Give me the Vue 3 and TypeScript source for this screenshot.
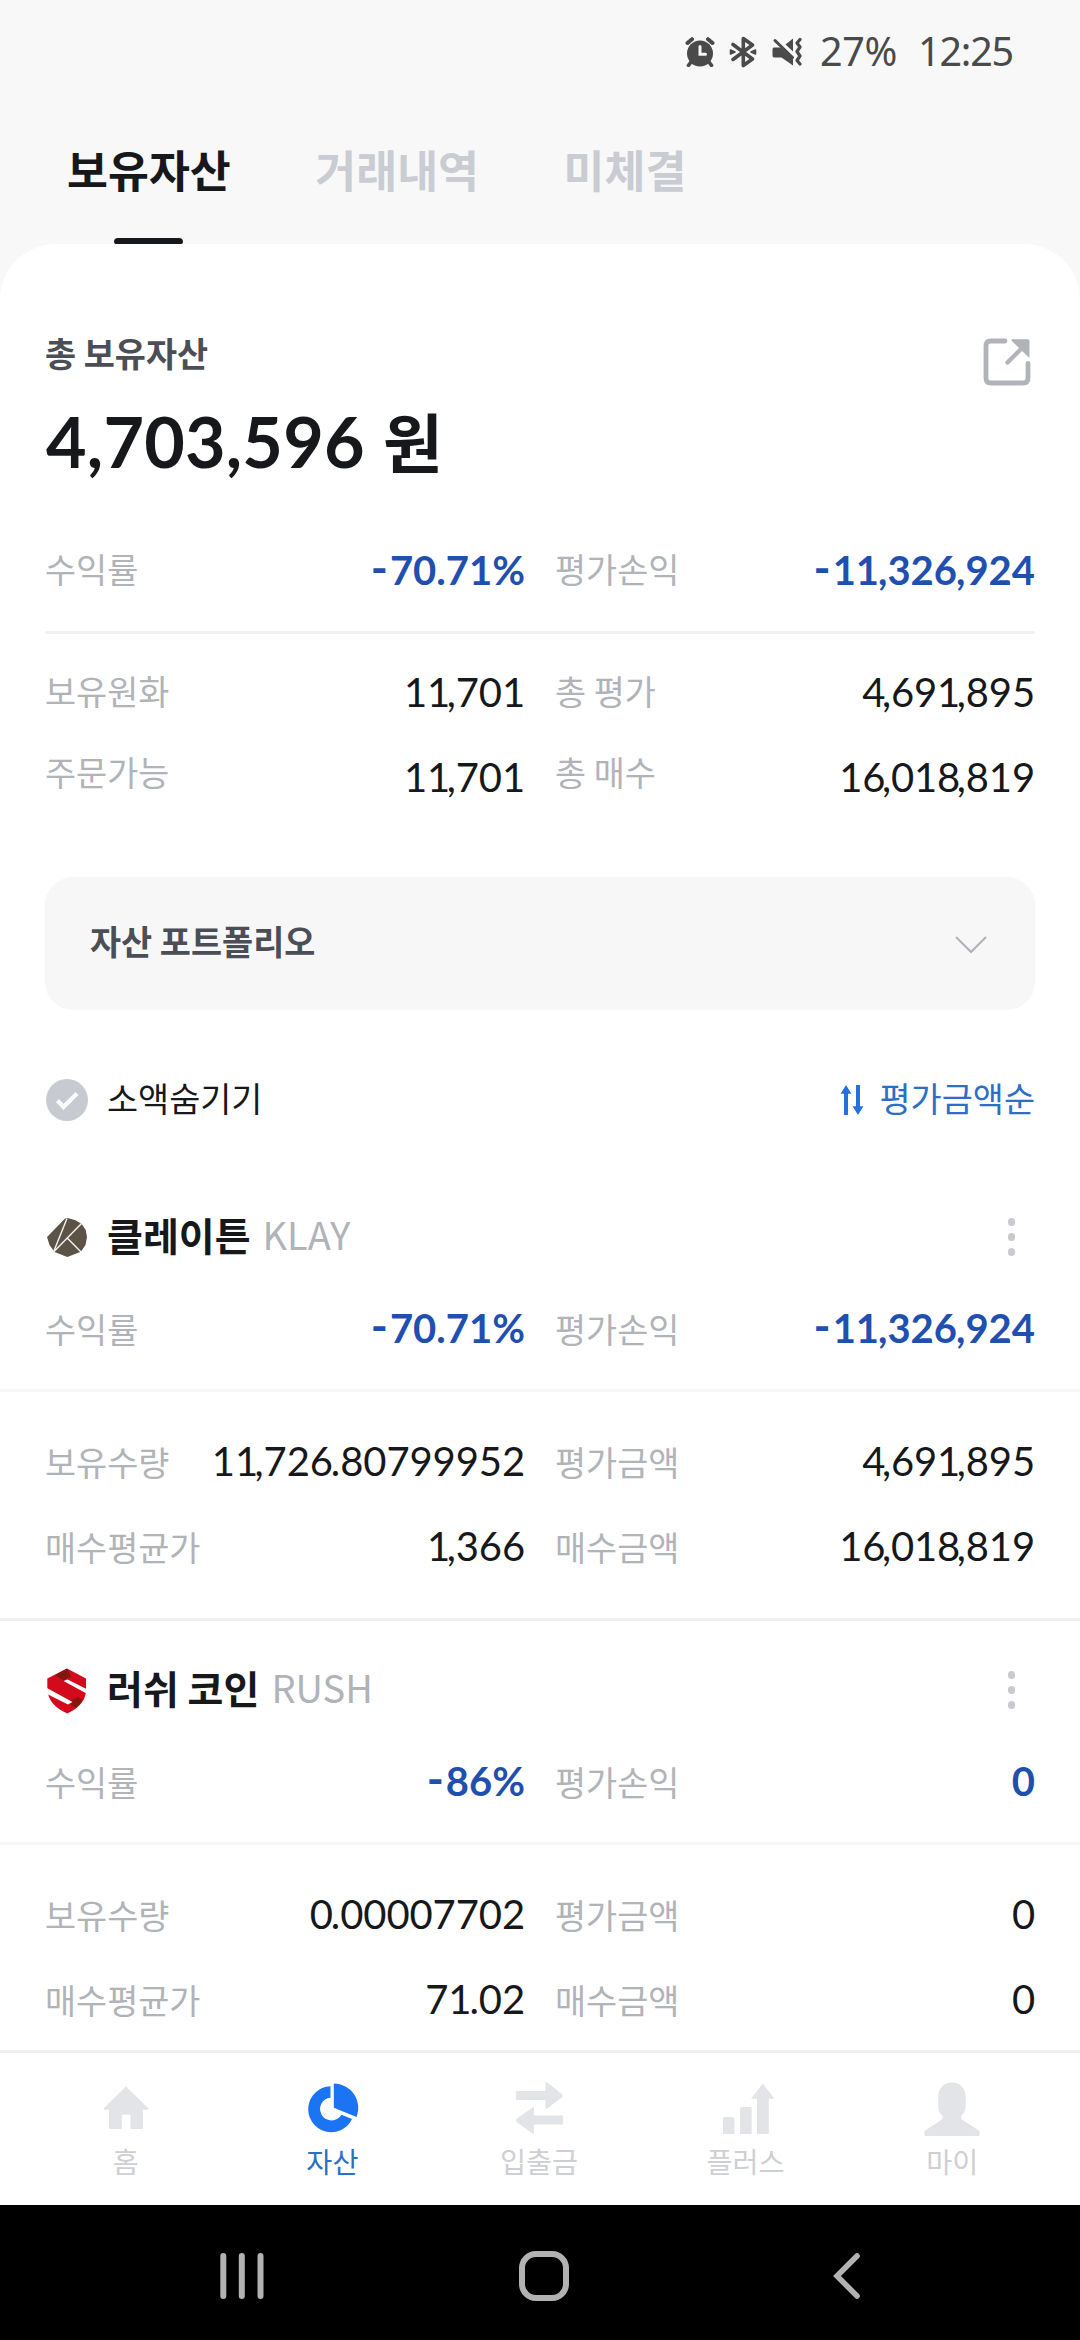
<script setup lang="ts">
interface Stat {
  label: string
  value: string
}

interface Coin {
  id: string
  name: string
  symbol: string
  profit: Stat[]
  details: Stat[][]
}

interface NavItem {
  id: string
  label: string
  active?: boolean
}

const tabs: string[] = ['보유자산', '거래내역', '미체결']

const summaryProfit: Stat[] = [
  { label: '수익률', value: '-70.71%' },
  { label: '평가손익', value: '-11,326,924' },
]

const summaryCash: Stat[] = [
  { label: '보유원화', value: '11,701' },
  { label: '총 평가', value: '4,691,895' },
]

const summaryOrder: Stat[] = [
  { label: '주문가능', value: '11,701' },
  { label: '총 매수', value: '16,018,819' },
]

const coins: Coin[] = [
  {
    id: 'klay',
    name: '클레이튼',
    symbol: 'KLAY',
    profit: [
      { label: '수익률', value: '-70.71%' },
      { label: '평가손익', value: '-11,326,924' },
    ],
    details: [
      [
        { label: '보유수량', value: '11,726.80799952' },
        { label: '평가금액', value: '4,691,895' },
      ],
      [
        { label: '매수평균가', value: '1,366' },
        { label: '매수금액', value: '16,018,819' },
      ],
    ],
  },
  {
    id: 'rush',
    name: '러쉬 코인',
    symbol: 'RUSH',
    profit: [
      { label: '수익률', value: '-86%' },
      { label: '평가손익', value: '0' },
    ],
    details: [
      [
        { label: '보유수량', value: '0.00007702' },
        { label: '평가금액', value: '0' },
      ],
      [
        { label: '매수평균가', value: '71.02' },
        { label: '매수금액', value: '0' },
      ],
    ],
  },
]

const navItems: NavItem[] = [
  { id: 'home', label: '홈' },
  { id: 'asset', label: '자산', active: true },
  { id: 'transfer', label: '입출금' },
  { id: 'plus', label: '플러스' },
  { id: 'my', label: '마이' },
]

// Splits an amount into digit runs and punctuation, so punctuation can be kerned on its own.
function parts(value: string): string[] {
  return value.split(/([,.-])/).filter((p) => p !== '')
}

function partClass(part: string): string {
  if (part === ',') return 'comma'
  if (part === '.') return 'point'
  if (part === '-') return 'minus'
  return 'digits'
}
</script>

<template>
  <div class="screen">
    <header class="status">
      <svg class="status-icon alarm" viewBox="0 0 30 30">
        <circle cx="15" cy="16.5" r="13" fill="#4a4a4a" />
        <path d="M2.5 6 L7 2.2 M27.5 6 L23 2.2" stroke="#4a4a4a" stroke-width="4" stroke-linecap="round" />
        <path d="M6 25 L3.5 28.3 M24 25 L26.5 28.3" stroke="#4a4a4a" stroke-width="3.6" stroke-linecap="round" />
        <path d="M15 9.5 V17.3 H20.5" fill="none" stroke="#f8f8f8" stroke-width="3" stroke-linecap="round" />
      </svg>
      <svg class="status-icon bluetooth" viewBox="0 0 28 32">
        <path d="M4 8.5 L23.5 23 L14.3 29.5 V2.5 L23.5 9 L4 23.5" fill="none" stroke="#4a4a4a" stroke-width="3.6" stroke-linecap="round" stroke-linejoin="round" />
        <path d="M1.5 14 L6 16 L1.5 18 Z M26.5 14 L22 16 L26.5 18 Z" fill="#4a4a4a" stroke="#4a4a4a" stroke-width="1.6" stroke-linejoin="round" />
      </svg>
      <svg class="status-icon mute" viewBox="0 0 30 30">
        <path d="M2 10.5 H8.5 L21 22 V28.5 L9.5 20.5 H2 Q.5 20.5 .5 18.5 V12.5 Q.5 10.5 2 10.5 Z" fill="#4a4a4a" />
        <path d="M21 1.5 V14.5 L13.5 7.5 Z" fill="#4a4a4a" />
        <path d="M3 3.5 L20.5 20.5" stroke="#4a4a4a" stroke-width="3" stroke-linecap="round" />
        <path d="M28 2.500 L25 6 L28 10 L25 14.500 L28 19 L25 23.500 L28 27" fill="none" stroke="#4a4a4a" stroke-width="3.2" stroke-linecap="round" stroke-linejoin="round" />
      </svg>
      <span class="battery">27%</span>
      <span class="clock">12:25</span>
    </header>

    <nav class="tabs">
      <div v-for="(tab, i) in tabs" :key="tab" class="tab" :class="{ on: i === 0 }">
        <span class="tab-text">{{ tab }}</span>
        <span v-if="i === 0" class="tab-line"></span>
      </div>
    </nav>

    <main class="card">
      <section class="summary">
        <div class="summary-head">
          <h1 class="title">총 보유자산</h1>
          <svg class="share" viewBox="0 0 48 48">
            <path d="M22 3 H8 Q3 3 3 8 V40 Q3 45 8 45 H40 Q45 45 45 40 V25.5" fill="none" stroke="#b0b3ba" stroke-width="4.8" stroke-linecap="round" />
            <path d="M24.5 24.5 L38 11" stroke="#b0b3ba" stroke-width="4.4" stroke-linecap="round" />
            <path d="M29.5 1.2 H44.8 Q46.5 1.2 46.5 3 V18.3 Q46.5 20 45 18.7 L28.8 3 Q27.5 1.2 29.5 1.2 Z" fill="#b0b3ba" />
          </svg>
        </div>
        <p class="total">4,703,596 <span class="won">원</span></p>

        <div class="row row-profit">
          <div v-for="s in summaryProfit" :key="s.label" class="cell">
            <span class="label">{{ s.label }}</span>
            <span class="value blue"><span v-for="(p, k) in parts(s.value)" :key="k" :class="partClass(p)">{{ p }}</span></span>
          </div>
        </div>
        <hr class="rule" />
        <div class="row row-cash">
          <div v-for="s in summaryCash" :key="s.label" class="cell">
            <span class="label">{{ s.label }}</span>
            <span class="value"><span v-for="(p, k) in parts(s.value)" :key="k" :class="partClass(p)">{{ p }}</span></span>
          </div>
        </div>
        <div class="row row-order">
          <div v-for="s in summaryOrder" :key="s.label" class="cell">
            <span class="label">{{ s.label }}</span>
            <span class="value"><span v-for="(p, k) in parts(s.value)" :key="k" :class="partClass(p)">{{ p }}</span></span>
          </div>
        </div>

        <div class="portfolio">
          <span class="portfolio-text">자산 포트폴리오</span>
          <svg class="chevron" viewBox="0 0 32 18">
            <path d="M1 1 L16 16 L31 1" fill="none" stroke="#b0b3b9" stroke-width="2" />
          </svg>
        </div>

        <div class="filter">
          <svg class="check" viewBox="0 0 42 42">
            <circle cx="21" cy="21" r="21" fill="#c8cad1" />
            <path d="M11.5 21.5 L17.5 28 L31 14.5" fill="none" stroke="#fff" stroke-width="4.2" />
          </svg>
          <span class="filter-text">소액숨기기</span>
          <svg class="sort-icon" viewBox="0 0 22 30">
            <path d="M5 0 L10.4 8.7 H7 V30 H3 V8.7 H-.4 Z M17 30 L11.6 21.3 H15 V0 H19 V21.3 H22.4 Z" fill="#2570dc" />
          </svg>
          <span class="sort-text">평가금액순</span>
        </div>
      </section>

      <section v-for="coin in coins" :key="coin.id" class="coin">
        <div class="coin-head">
          <svg v-if="coin.id === 'klay'" class="coin-icon" viewBox="0 0 42 46">
            <path d="M19 3.5 L21.5 3 L29 5 L35.5 8.7 L39.7 15 L41 22.3 L39.5 30 L34.8 36.7 L21.3 42 L8.5 37 L3.5 30 L1 22 L4 19 Z" fill="#5c5346" />
            <path d="M21 3.5 L7.5 37 M35.5 8.5 L7.5 37 M21 22.8 L35 37" fill="none" stroke="#f5f3ef" stroke-width="1.4" />
          </svg>
          <svg v-else class="coin-icon" viewBox="0 0 42 46">
            <path d="M21 .5 L40 10.5 V21 Q40.500 36.500 21.300 45.500 Q2 37 1.300 21 V10.500 Z" fill="#d20a1c" />
            <path d="M21 .5 L9 7 Q14 10.500 18 13 Q20 9.500 25 9 Z" fill="#83170f" />
            <path d="M32 29 L21.500 34.500 L30 40 Q34.500 36.500 36 32 Z" fill="#83170f" />
            <path d="M17.500 13 L21.500 11.500 L40.500 21 V25.500 Z M0 19.500 L26.500 34 L22 36.500 L1 26 Z" fill="#fff" />
          </svg>
          <span class="coin-name">{{ coin.name }}</span>
          <span class="coin-symbol">{{ coin.symbol }}</span>
          <span class="more"><i></i><i></i><i></i></span>
        </div>
        <div class="row coin-profit">
          <div v-for="s in coin.profit" :key="s.label" class="cell">
            <span class="label">{{ s.label }}</span>
            <span class="value blue"><span v-for="(p, k) in parts(s.value)" :key="k" :class="partClass(p)">{{ p }}</span></span>
          </div>
        </div>
        <hr class="coin-rule" />
        <div v-for="(line, i) in coin.details" :key="i" class="row coin-detail">
          <div v-for="s in line" :key="s.label" class="cell">
            <span class="label">{{ s.label }}</span>
            <span class="value"><span v-for="(p, k) in parts(s.value)" :key="k" :class="partClass(p)">{{ p }}</span></span>
          </div>
        </div>
      </section>
    </main>

    <nav class="bottom">
      <div v-for="item in navItems" :key="item.id" class="nav-item" :class="{ active: item.active }">
        <svg class="nav-icon" viewBox="0 0 60 60">
          <path v-if="item.id === 'home'" d="M30 9.5 L52 31 Q53 32.7 51 32.7 H47 V50.5 Q47 52 45.5 52 H34.5 V38.7 Q34.5 37.5 33.3 37.5 H27 Q25.8 37.5 25.8 38.7 V52 H14.5 Q13 52 13 50.5 V32.7 H9 Q7 32.7 8 31 Z" />
          <template v-else-if="item.id === 'asset'">
            <path d="M28.5 9.2 A23 23 0 1 0 50 42 L39.5 37.7 A11.5 11.5 0 1 1 28.5 20.5 Z" />
            <path d="M31.8 6.5 A24.5 24.5 0 0 1 54.5 40 L31.8 30.8 Z" />
          </template>
          <path v-else-if="item.id === 'transfer'" d="M8 14 Q7 14 7 15 V22 Q7 23 8 23 H36.5 V30.5 Q36.5 32.5 38.5 31.2 L53 20.3 Q54 18.6 53 17.3 L38.5 5.5 Q36.5 4.2 36.5 6 V14 Z M53 38.5 Q54 38.5 54 39.5 V46.5 Q54 47.5 53 47.5 H25 V55.5 Q25 57.5 23 56.2 L7.5 45 Q6.5 43.3 7.5 42 L23 30.8 Q25 29.5 25 31.5 V38.5 Z" />
          <path v-else-if="item.id === 'plus'" d="M7 41.5 Q7 40 8.5 40 H17 Q18.5 40 18.5 41.5 V57 H7 Z M24 31.5 Q24 30 25.5 30 H34.2 Q35.7 30 35.7 31.5 V57 H24 Z M41 57 V21.7 H35 L46.7 6.5 L58.5 21.7 H52.8 V57 Z" />
          <path v-else d="M30 5.5 C38 5.5 43.7 11.5 43.7 19 V29 C43.7 34 41 37 39.3 38.5 V42 L57.5 54 V59 H2.5 V54 L20.5 42 V38.5 C18 36.5 16.3 34 16.3 29 V19 C16.3 11.5 22 5.5 30 5.5 Z" />
        </svg>
        <span class="nav-label">{{ item.label }}</span>
      </div>
    </nav>

    <footer class="system">
      <svg class="sys recents" viewBox="0 0 46 50">
        <path d="M4.3 5 V45 M22.8 5 V45 M41.5 5 V45" stroke="#b2b2b2" stroke-width="6" stroke-linecap="round" />
      </svg>
      <svg class="sys home" viewBox="0 0 50 50">
        <rect x="3" y="3" width="44" height="44" rx="14" fill="none" stroke="#b2b2b2" stroke-width="6" />
      </svg>
      <svg class="sys back" viewBox="0 0 30 50">
        <path d="M26 5 L6 25 L26 45" fill="none" stroke="#b2b2b2" stroke-width="5.6" stroke-linecap="round" />
      </svg>
    </footer>
  </div>
</template>

<style>
body {
  margin: 0;
  background: #f8f8f8;
}
</style>

<style scoped>
.screen {
  display: flex;
  flex-direction: column;
  width: 1080px;
  height: 2340px;
  overflow: hidden;
  background: #f8f8f8;
  color: #17181b;
  font-family: 'Noto Sans CJK KR', sans-serif;
}

.status {
  display: flex;
  flex: none;
  align-items: center;
  box-sizing: border-box;
  height: 100px;
  padding: 4px 67px 0 685px;
  color: #4a4a4a;
  font-family: 'Noto Sans', sans-serif;
  font-size: 39.5px;
  line-height: 60px;
  white-space: nowrap;
}

.status-icon {
  flex: none;
}

.alarm {
  width: 30px;
  height: 30px;
}

.bluetooth {
  width: 28px;
  height: 32px;
  margin-left: 14px;
}

.mute {
  width: 30px;
  height: 30px;
  margin-left: 15px;
}

.battery {
  margin-left: 18px;
  padding-bottom: 3px;
  letter-spacing: -0.4px;
}

.clock {
  margin-left: auto;
  padding-bottom: 3px;
  letter-spacing: -1.2px;
}

.tabs {
  display: flex;
  flex: none;
  gap: 84.5px;
  height: 144px;
  padding-left: 67px;
}

.tab {
  display: flex;
  flex-direction: column;
  align-items: center;
  justify-content: space-between;
  color: #c9ccd3;
  font-size: 44.5px;
  font-weight: 700;
}

.tab-text {
  margin-top: 39px;
  line-height: 60px;
  white-space: nowrap;
}

.tab.on {
  color: #17181b;
}

.tab-line {
  width: 69px;
  height: 6px;
  border-radius: 4px 4px 2px 2px;
  background: #17181b;
}

.card {
  flex: none;
  height: 1806px;
  overflow: hidden;
  border-radius: 56px 56px 0 0;
  background: #fff;
}

.summary {
  padding: 79px 45px 0;
}

.summary-head {
  display: flex;
  align-items: flex-start;
  justify-content: space-between;
  height: 60px;
}

.title {
  margin: 0;
  color: #4b4e56;
  font-size: 33.8px;
  font-weight: 700;
  line-height: 60px;
}

.share {
  width: 48px;
  height: 48px;
  margin: 15px 4px 0 0;
}

.total {
  height: 80px;
  margin: 18px 0 0 1px;
  font-family: Lato, 'Noto Sans CJK KR', sans-serif;
  font-size: 70px;
  font-weight: 700;
  letter-spacing: 0.2px;
  line-height: 80px;
  white-space: nowrap;
}

.won {
  margin-left: 1px;
  font-size: 65px;
}

.row {
  display: grid;
  grid-template-columns: 480px 480px;
  gap: 30px;
  height: 60px;
}

.cell {
  display: flex;
  align-items: flex-start;
  justify-content: space-between;
  white-space: nowrap;
}

.label {
  color: #b0b3b8;
  font-size: 33.8px;
  line-height: 60px;
}

.value {
  font-family: Lato, 'Noto Sans CJK KR', sans-serif;
  font-size: 40px;
  letter-spacing: -0.1px;
  line-height: 60px;
}

.comma {
  margin-left: -3.5px;
}

.point {
  margin-left: -2px;
}

.blue {
  color: #1f50b0;
  font-weight: 700;
  letter-spacing: 0;
}

.blue .comma {
  margin-left: -1px;
}

.blue .point {
  margin-left: 0;
}

.blue .minus {
  margin-right: 2px;
  font-size: 46px;
  line-height: 0;
}

.row-profit {
  margin-top: 58px;
}

.row-profit .value {
  padding-top: 1px;
}

.rule {
  height: 3px;
  margin: 32px 0 0;
  border: 0;
  background: #f0f1f2;
}

.row-cash {
  margin-top: 27px;
}

.row-cash .value {
  padding-top: 1px;
}

.row-order {
  height: 63px;
  margin-top: 21px;
}

.row-order .value {
  padding-top: 5px;
}

.portfolio {
  display: flex;
  align-items: center;
  justify-content: space-between;
  box-sizing: border-box;
  height: 133px;
  margin-top: 72px;
  padding: 0 48px 0 45px;
  border-radius: 28px;
  background: #f7f7f8;
}

.portfolio-text {
  padding-bottom: 5px;
  color: #4b4e56;
  font-size: 33.8px;
  font-weight: 700;
  line-height: 60px;
}

.chevron {
  width: 32px;
  height: 18px;
  margin-top: 2px;
}

.filter {
  display: flex;
  align-items: center;
  height: 60px;
  margin-top: 60px;
  font-size: 33.8px;
  line-height: 60px;
}

.check {
  width: 42px;
  height: 42px;
  margin-left: 1px;
}

.filter-text {
  margin-left: 19px;
  padding-bottom: 4px;
}

.sort-icon {
  width: 22px;
  height: 30px;
  margin-left: auto;
  overflow: visible;
}

.sort-text {
  margin-left: 17px;
  padding-bottom: 4px;
  color: #2b6fc9;
}

.coin {
  box-sizing: border-box;
  height: 453px;
  padding-top: 39px;
  border-bottom: 3px solid #eff0f1;
}

.summary + .coin {
  margin-top: 38px;
}

.coin-head {
  display: flex;
  align-items: center;
  height: 60px;
  padding: 0 65px 0 46px;
  font-size: 39px;
  line-height: 60px;
  white-space: nowrap;
}

.coin-icon {
  width: 42px;
  height: 46px;
  margin-top: 1px;
}

.coin-name {
  margin-left: 19px;
  padding-bottom: 6px;
  font-weight: 700;
}

.coin-symbol {
  margin-left: 12px;
  padding-bottom: 6px;
  color: #b0b3b8;
  font-size: 38px;
}

.more {
  display: flex;
  flex-direction: column;
  gap: 7.5px;
  margin-left: auto;
}

.more i {
  width: 7.5px;
  height: 7.5px;
  border-radius: 50%;
  background: #c8cad0;
}

.coin .row {
  margin-left: 45px;
  margin-right: 45px;
}

.coin .label {
  padding-top: 1px;
}

.coin-profit {
  margin-top: 31px;
}

.coin-rule {
  height: 3px;
  margin: 31px 0 39px;
  border: 0;
  background: #f7f7f8;
}

.coin-detail + .coin-detail {
  margin-top: 25px;
}

.bottom {
  display: grid;
  flex: none;
  grid-template-columns: repeat(5, 1fr);
  box-sizing: border-box;
  height: 155px;
  padding: 24px 24.5px 0 22.5px;
  border-top: 3px solid #eff0f1;
  background: #fff;
}

.nav-item {
  display: flex;
  flex-direction: column;
  align-items: center;
  color: #cdcfd4;
}

.nav-icon {
  width: 60px;
  height: 60px;
  fill: #e3e4e8;
}

.nav-label {
  margin-top: 4px;
  font-size: 28.3px;
  line-height: 40px;
}

.active {
  color: #2b6fc9;
}

.active .nav-icon {
  fill: #1b74f4;
}

.system {
  display: flex;
  flex: none;
  align-items: center;
  box-sizing: border-box;
  height: 135px;
  padding: 7px 219px 0;
  background: #000;
}

.recents {
  width: 46px;
  height: 50px;
}

.home {
  width: 50px;
  height: 50px;
  margin-left: 254px;
}

.back {
  width: 30px;
  height: 50px;
  margin-left: 262px;
}
</style>
